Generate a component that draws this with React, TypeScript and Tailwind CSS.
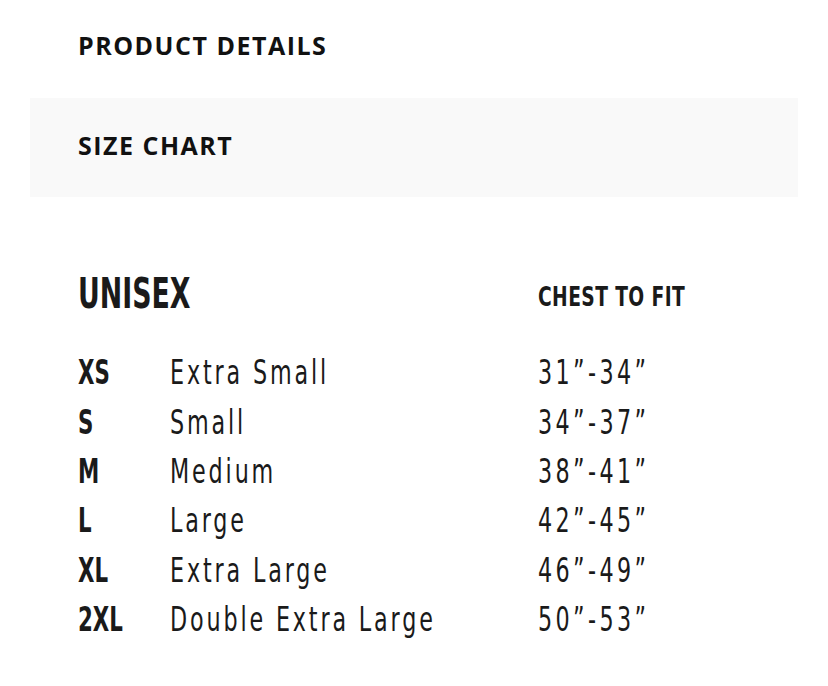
const rows = [
  { size: 'XS', name: 'Extra Small', chest: '31”-34”' },
  { size: 'S', name: 'Small', chest: '34”-37”' },
  { size: 'M', name: 'Medium', chest: '38”-41”' },
  { size: 'L', name: 'Large', chest: '42”-45”' },
  { size: 'XL', name: 'Extra Large', chest: '46”-49”' },
  { size: '2XL', name: 'Double Extra Large', chest: '50”-53”' },
]

const narrow = { fontFamily: '"DejaVu Sans Condensed", "DejaVu Sans", sans-serif', fontStretch: 'condensed' }

export default function App() {
  return (
    <div className="w-[828px] h-[686px] bg-white px-[30px] text-[#111]" style={{ fontFamily: '"Open Sans", sans-serif' }}>
      <div className="h-[98px] flex items-center pl-[48px] pb-[6px]">
        <h2 className="text-[25px] font-bold tracking-[1.5px]">PRODUCT DETAILS</h2>
      </div>
      <div className="h-[99px] bg-[#f9f9f9] flex items-center pl-[48px] pb-[4px]">
        <h2 className="text-[25px] font-bold tracking-[1.5px]">SIZE CHART</h2>
      </div>

      <div className="pl-[48px] pt-[72px] text-[#1a1a1a]" style={narrow}>
        <div className="grid grid-cols-[92px_368px_1fr] items-center h-[50px]">
          <div className="col-span-2">
            <span className="inline-block origin-left scale-x-[0.71] text-[42px] font-bold leading-none">UNISEX</span>
          </div>
          <div className="pt-[8px]">
            <span className="inline-block origin-left scale-x-[0.77] text-[27px] font-bold leading-none tracking-[0.5px]">CHEST TO FIT</span>
          </div>
        </div>
        <div className="mt-[30px]">
          {rows.map((r) => (
            <div key={r.size} className="grid grid-cols-[92px_368px_1fr] items-center h-[49.4px]">
              <div>
                <span className="inline-block origin-left scale-x-[0.72] text-[33px] font-bold leading-none">{r.size}</span>
              </div>
              <div>
                <span className="inline-block origin-left scale-x-[0.75] text-[33px] leading-none tracking-[3.8px] whitespace-nowrap">{r.name}</span>
              </div>
              <div>
                <span className="inline-block origin-left scale-x-[0.75] text-[33px] leading-none tracking-[4.5px] whitespace-nowrap">{r.chest}</span>
              </div>
            </div>
          ))}
        </div>
      </div>
    </div>
  )
}
